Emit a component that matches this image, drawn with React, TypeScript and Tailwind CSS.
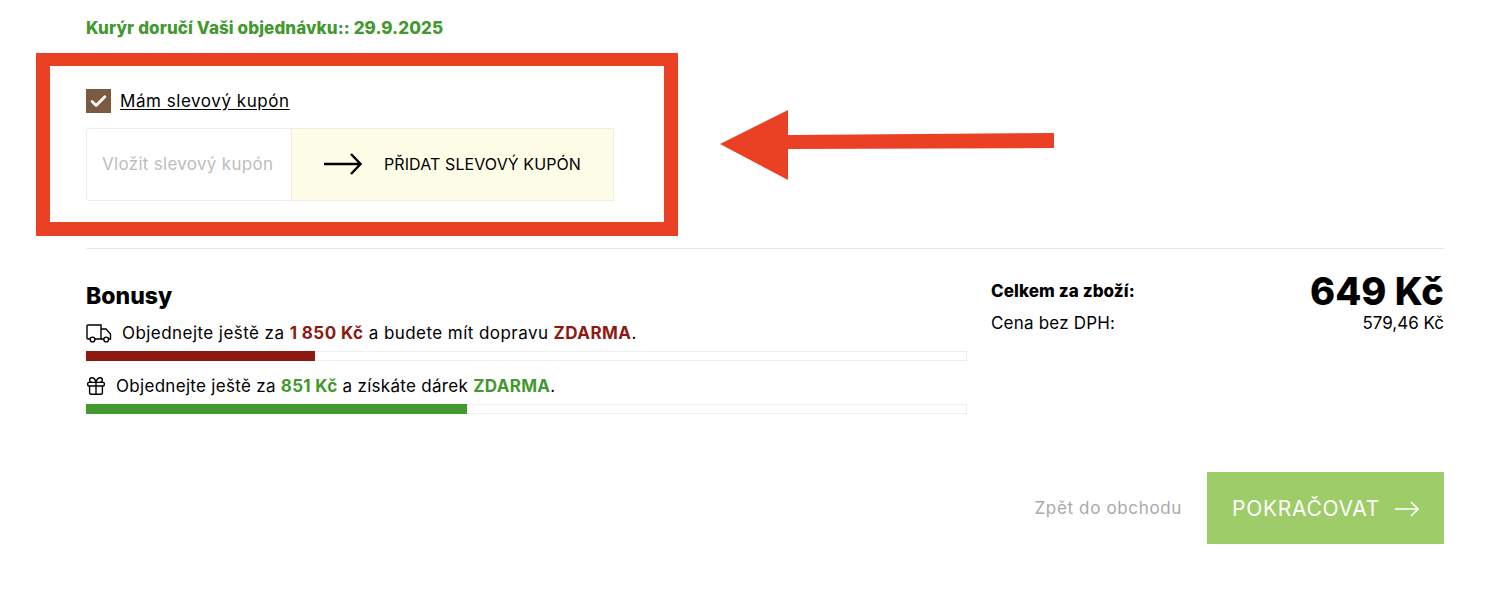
import { Check, Gift } from "lucide-react";

const font = "font-['Inter','Noto_Sans',sans-serif]";

const Progress = ({ width, color }: { width: string; color: string }) => (
  <div className="h-[10px] w-[881px] border border-[#eeeeee] bg-white">
    <div className={`-mt-px -ml-px h-[10px] ${width} ${color}`} />
  </div>
);

const App = () => {
  return (
    <div className={`relative h-[606px] w-[1498px] overflow-hidden bg-white pl-[86px] pr-[54px] text-black ${font}`}>
      <p className="pt-[18px] text-[17px] leading-5 font-extrabold tracking-[0.1px] text-[#43982f]">
        Kurýr doručí Vaši objednávku:: 29.9.2025
      </p>

      {/* Coupon */}
      <div className="mt-[51px] flex h-[24px] items-center gap-[9px]">
        <span className="flex h-[24px] w-[25px] items-center justify-center bg-[#7b5a42]">
          <Check className="h-[19px] w-[19px] text-white" strokeWidth={3.5} />
        </span>
        <span className="text-[17px] leading-6 tracking-[0.55px] underline underline-offset-2">Mám slevový kupón</span>
      </div>
      <div className="mt-[15px] flex h-[73px] w-[528px]">
        <div className="flex w-[205px] items-center rounded-l-sm border border-r-0 border-[#ececec] pl-[15px] text-[17px] tracking-[0.3px] text-[#bdbdbd]">
          Vložit slevový kupón
        </div>
        <div className="flex flex-1 items-center border border-[#efefdc] bg-[#fefee8] pb-[2px] pl-[31px]">
          <svg className="h-[24px] w-[39px]" viewBox="0 0 39 24" fill="none" stroke="#000" strokeWidth="2.4">
            <path d="M1 12h36M28 2l9.5 10L28 22" />
          </svg>
          <span className="ml-[22px] text-[16px] tracking-[0.1px]">PŘIDAT SLEVOVÝ KUPÓN</span>
        </div>
      </div>

      <div className="mt-[47px] h-px bg-[#e8e8e8]" />

      {/* Bonuses and totals */}
      <div className="mt-[30px] flex justify-between">
        <div>
          <h2 className="text-[23px] leading-[34px] font-extrabold">Bonusy</h2>
          <div className="mt-[8px] flex h-[24px] items-center text-[17px] tracking-[0.44px]">
            <svg className="h-[19px] w-[26px]" viewBox="0 0 26 19" fill="none" stroke="#000" strokeWidth="1.4">
              <path d="M4 15H2a1 1 0 0 1-1-1V2a1 1 0 0 1 1-1h13v14H9" />
              <path d="M15 5h5l4.5 5v5h-2M15 15h3" />
              <circle cx="6.5" cy="15.5" r="2.4" />
              <circle cx="20.2" cy="15.5" r="2.4" />
            </svg>
            <span className="ml-[10px] pt-[2px]">
              Objednejte ještě za <b className="text-[#8c1a11]">1 850 Kč</b> a budete mít dopravu{" "}
              <b className="text-[#8c1a11]">ZDARMA</b>.
            </span>
          </div>
          <div className="mt-[6px]">
            <Progress width="w-[229px]" color="bg-[#8c1a11]" />
          </div>
          <div className="mt-[13px] flex h-[24px] items-center text-[17px] tracking-[0.3px]">
            <Gift className="-ml-px h-[22px] w-[22px]" strokeWidth={1.5} />
            <span className="ml-[9px] pt-[2px]">
              Objednejte ještě za <b className="text-[#43982f]">851 Kč</b> a získáte dárek{" "}
              <b className="text-[#43982f]">ZDARMA</b>.
            </span>
          </div>
          <div className="mt-[6px]">
            <Progress width="w-[381px]" color="bg-[#43982f]" />
          </div>
        </div>

        <div className="-mt-[7px] w-[453px]">
          <div className="flex items-center justify-between">
            <span className="pt-[2px] text-[17px] font-extrabold tracking-[0.1px]">Celkem za zboží:</span>
            <span className="text-[38px] leading-[38px] font-extrabold">649 Kč</span>
          </div>
          <div className="flex items-center justify-between pt-px text-[17px] leading-6">
            <span className="tracking-[0.2px]">Cena bez DPH:</span>
            <span>579,46 Kč</span>
          </div>
        </div>
      </div>

      <div className="mt-[58px] flex items-center justify-end">
        <span className="pt-[2px] text-[17px] tracking-[0.65px] text-[#a9a9a9]">Zpět do obchodu</span>
        <button className="ml-[25px] flex h-[72px] w-[237px] items-center justify-center gap-[15px] bg-[#9dcc68] pt-px text-[21px] tracking-[0.7px] text-white">
          POKRAČOVAT
          <svg className="h-[16px] w-[24px]" viewBox="0 0 24 16" fill="none" stroke="#fff" strokeWidth="1.6">
            <path d="M0 8h23M16 1l7 7-7 7" />
          </svg>
        </button>
      </div>

      {/* Red annotation */}
      <div className="absolute top-[53px] left-[36px] h-[183px] w-[642px] border-x-[14px] border-t-[13px] border-b-[14px] border-[#ea4124]" />
      <svg className="absolute top-[109px] left-[719px] h-[72px] w-[336px]" viewBox="0 0 336 72" fill="#ea4124">
        <path d="M1 35 69 1v25l266-2v15L69 40v31z" />
      </svg>
    </div>
  );
};

export default App;
